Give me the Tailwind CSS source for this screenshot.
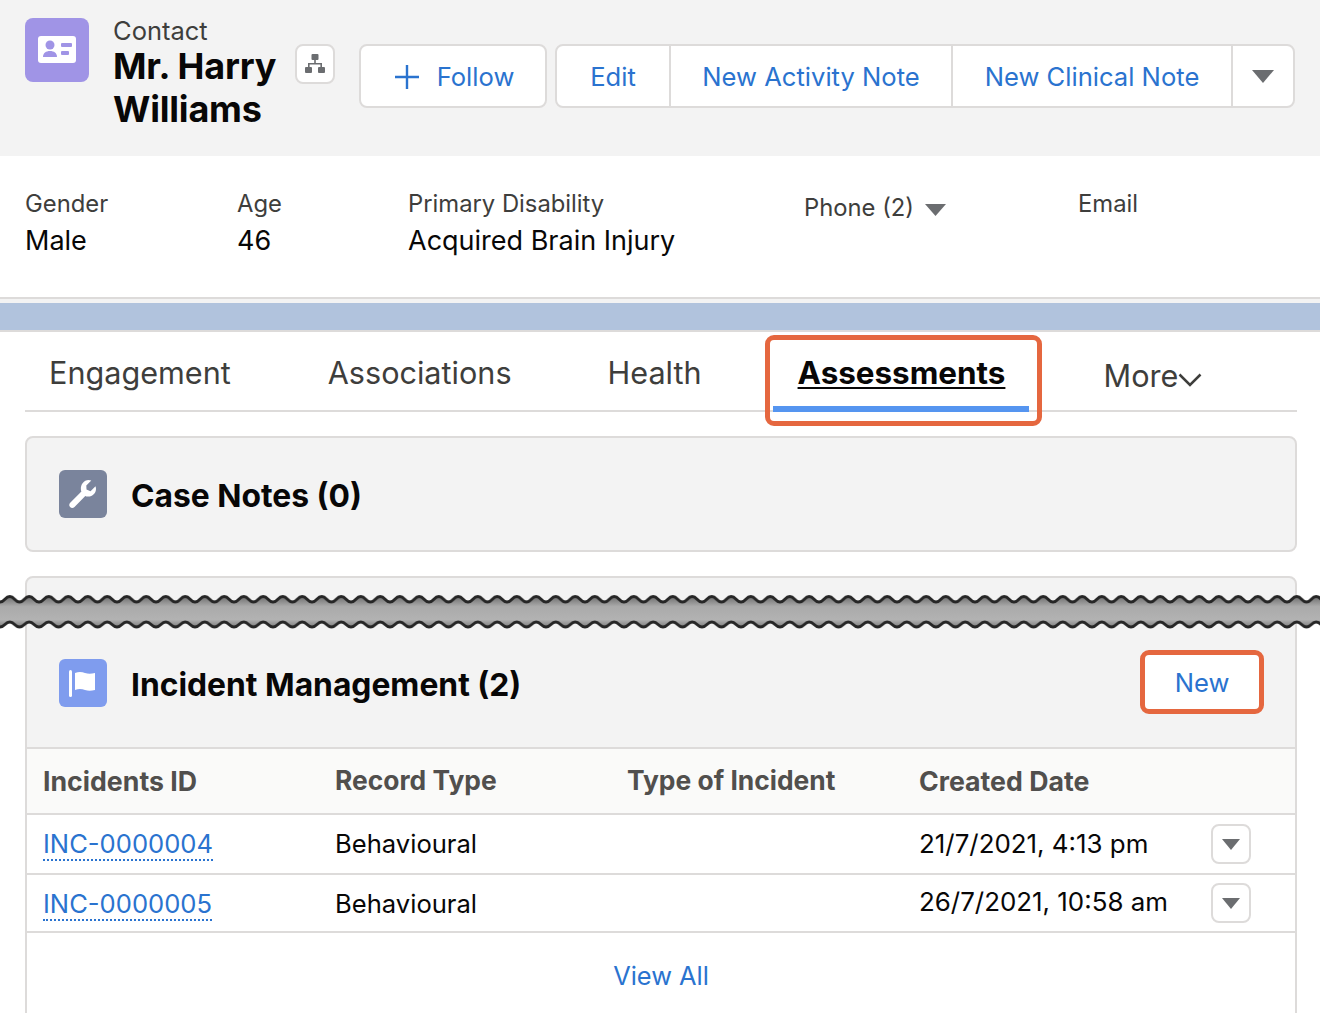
<!DOCTYPE html>
<html lang="en">
<head>
<title>Mr. Harry Williams | Contact</title>
<meta name="viewport" content="width=device-width, initial-scale=1" />
<script src="https://cdn.jsdelivr.net/npm/@tailwindcss/browser@4"></script>
</head>

<body class="relative h-[1013px] overflow-hidden bg-white font-['Inter','Liberation_Sans',sans-serif] text-[#080707]">

<!-- record header -->
<header class="flex h-[156px] bg-[#f3f3f3] pl-[25px] pr-[25px] pt-[18px]">
  <div class="flex h-16 w-16 shrink-0 items-center justify-center rounded-lg bg-[#a094e6]">
    <svg class="h-[28px] w-[38px]" viewBox="0 0 38 28">
      <rect width="38" height="27" rx="3" fill="#fff" />
      <circle cx="12" cy="9" r="4.500" fill="#a094e6" />
      <path d="M5 21c0-4 3-6 7-6s7 2 7 6z" fill="#a094e6" />
      <rect x="23" y="7" width="11" height="4" rx="1" fill="#a094e6" />
      <rect x="23" y="15" width="8" height="4" rx="1" fill="#a094e6" />
    </svg>
  </div>
  <div class="ml-[24px] w-[182px] shrink-0">
    <p class="h-[26px] text-[25.5px] leading-[26px] text-[#3e3e3c]">Contact</p>
    <h1 class="mt-[1px] text-[36px] font-bold leading-[43px] tracking-[-0.2px]">Mr. Harry Williams</h1>
  </div>
  <button class="mt-[26px] flex h-10 w-10 shrink-0 items-center justify-center rounded-lg border-2 border-[#dddbda] bg-white">
    <svg class="h-5 w-5" viewBox="0 0 20 20" fill="#6b6d70">
      <rect x="6.500" y="0" width="7" height="6" rx="1" />
      <rect x="0" y="13" width="7" height="6" rx="1" />
      <rect x="13" y="13" width="7" height="6" rx="1" />
      <path d="M9.200 6h1.600v3H17v4h-1.600v-2.400H4.600V13H3V9h6.200z" />
    </svg>
  </button>
  <button class="ml-6 mt-[26px] flex h-16 w-[188px] shrink-0 items-center justify-center gap-[18px] rounded-lg border-2 border-[#dddbda] bg-white pl-[3px] pt-[2px] text-[25.6px] text-[#2a73cf]">
    <svg class="h-6 w-6" viewBox="0 0 24 24" fill="#2a73cf"><path d="M10.800 0h2.400v10.800H24v2.400H13.200V24h-2.400V13.200H0v-2.400h10.800z" /></svg>
    Follow
  </button>
  <div class="ml-2 mt-[26px] flex h-16 w-[740px] shrink-0 rounded-lg border-2 border-[#dddbda] bg-white text-[25.6px] text-[#2a73cf]">
    <button class="w-[114px] border-r-2 border-[#dddbda] pt-[2px]">Edit</button>
    <button class="w-[282px] border-r-2 border-[#dddbda] pt-[2px]">New Activity Note</button>
    <button class="w-[280px] border-r-2 border-[#dddbda] pt-[2px]">New Clinical Note</button>
    <button class="flex flex-1 items-center justify-center">
      <svg class="h-[13px] w-[22px]" viewBox="0 0 22 13" fill="#6b6d70"><path d="M0 0h22L11 13z" /></svg>
    </button>
  </div>
</header>

<!-- highlights panel -->
<section class="flex h-[141px] pl-[25px] pt-[33px]">
  <div class="w-[212px]">
    <p class="text-[23.800px] leading-[30px] text-[#3e3e3c]">Gender</p>
    <p class="mt-1 text-[27px] leading-[36px]">Male</p>
  </div>
  <div class="w-[171px]">
    <p class="text-[23.800px] leading-[30px] text-[#3e3e3c]">Age</p>
    <p class="mt-1 text-[27px] leading-[36px]">46</p>
  </div>
  <div class="w-[396px]">
    <p class="text-[23.800px] leading-[30px] text-[#3e3e3c]">Primary Disability</p>
    <p class="mt-1 text-[27px] leading-[36px]">Acquired Brain Injury</p>
  </div>
  <div class="w-[274px]">
    <p class="mt-1 flex items-center gap-[11px] text-[23.800px] leading-[30px] text-[#3e3e3c]">
      Phone (2)
      <svg class="mt-1 h-[12px] w-[21px]" viewBox="0 0 21 12" fill="#6b6d70"><path d="M0 0h21L10.500 12z" /></svg>
    </p>
  </div>
  <div>
    <p class="text-[23.800px] leading-[30px] text-[#3e3e3c]">Email</p>
  </div>
</section>

<div class="h-[6px] border-t-2 border-[#dddbda] bg-[#f3f3f3]"></div>
<div class="h-[29px] border-b-2 border-[#dddbda] bg-[#b1c3dd]"></div>

<!-- tabs -->
<nav class="mx-[25px] flex h-[80px] w-[1272px] border-b-2 border-[#dddbda] text-[30.600px] text-[#3e3e3c]">
  <a class="ml-[24px] mt-[21px] h-10 leading-10">Engagement</a>
  <a class="ml-[97px] mt-[21px] h-10 leading-10">Associations</a>
  <a class="ml-[96px] mt-[21px] h-10 leading-10">Health</a>
  <div class="relative ml-[71px] w-[256px]">
    <a class="absolute left-[25px] top-[21px] text-[31.400px] font-bold leading-10 text-[#080707] underline decoration-2 underline-offset-[3px]">Assessments</a>
    <div class="absolute bottom-[-2px] left-0 h-[6px] w-full bg-[#5595f0]"></div>
    <div class="absolute left-[-8px] top-[3px] h-[91px] w-[277px] rounded-[9px] border-[5px] border-[#e5673f]"></div>
  </div>
  <a class="ml-[75px] mt-[24px] flex h-10 items-center leading-10">More
    <svg class="mt-2 h-[14px] w-[24px]" viewBox="0 0 24 14" fill="none" stroke="#3e3e3c" stroke-width="2.500"><path d="M1.500 1.500 12 12 22.500 1.500" /></svg>
  </a>
</nav>

<main class="mx-[25px] mt-[24px] w-[1272px]">
  <section class="flex h-[116px] items-center rounded-lg border-2 border-[#dddbda] bg-[#f3f3f3] pl-8">
    <div class="flex h-12 w-12 items-center justify-center rounded-md bg-[#7a849c]">
      <svg class="h-[32px] w-[32px]" viewBox="0 0 32 32" fill="#fff"><path d="M21.500 2c1 0 2 .2 2.800.5l-5 5 .2 4 4 1.700 5-5c.4 1 .5 2 .5 2.800 0 4.500-4 8-8.500 7.500-.8-.1-1.500-.3-2.200-.6L7.500 29c-1.300 1.300-3.200 1.300-4.400.1-1.200-1.200-1.100-3.100.1-4.300L14.400 13.600c-.3-.7-.5-1.400-.5-2.100C13.400 6.500 17 2 21.500 2z" /></svg>
    </div>
    <h2 class="ml-6 mt-1 text-[31.800px] font-bold">Case Notes (0)</h2>
  </section>

  <section class="mt-6 h-[500px] rounded-t-lg border-2 border-[#dddbda] bg-[#f3f3f3]">
    <div class="flex h-[169px] items-center justify-between pl-8 pr-[31px] pt-[41px]">
      <div class="flex items-center">
        <div class="flex h-12 w-12 items-center justify-center rounded-md bg-[#7f9cee]">
          <svg class="h-[32px] w-[32px]" viewBox="0 0 32 32" fill="#fff">
            <rect x="2" y="3" width="3" height="27" rx="1.500" />
            <path d="M8 6c4-1.500 7-1 10 0s6 1 10 0v17c-4 1-7 1-10 0s-6-1.500-10 0z" />
          </svg>
        </div>
        <h2 class="ml-6 mt-1 text-[31.800px] font-bold">Incident Management (2)</h2>
      </div>
      <button class="mb-[2px] flex h-16 w-[124px] items-center justify-center rounded-[9px] border-[5px] border-[#e5673f] bg-white pt-[3px] text-[25.6px] text-[#2a73cf]">New</button>
    </div>

    <div class="h-[331px] bg-white">
      <div class="grid h-[68px] grid-cols-[292px_292px_292px_1fr] items-center border-y-2 border-[#dddbda] bg-[#fafaf9] pl-4 text-[26.400px] font-bold text-[#514f4d]">
        <span class="text-[26.700px]">Incidents ID</span>
        <span>Record Type</span>
        <span>Type of Incident</span>
        <span class="text-[26.700px]">Created Date</span>
      </div>
      <div class="grid h-[60px] grid-cols-[292px_292px_292px_292px_1fr] items-center border-b-2 border-[#dddbda] pl-4 text-[25.600px]">
        <a class="mt-[2px] w-fit border-b-2 border-dotted border-[#2a73cf] leading-[30px] text-[#2a73cf]">INC-0000004</a>
        <span>Behavioural</span>
        <span></span>
        <span class="text-[25.900px]">21/7/2021, 4:13 pm</span>
        <button class="flex h-10 w-10 items-center justify-center rounded-lg border-2 border-[#dddbda] bg-white">
          <svg class="h-[11px] w-[18px]" viewBox="0 0 18 11" fill="#6b6d70"><path d="M0 0h18L9 11z" /></svg>
        </button>
      </div>
      <div class="grid h-[58px] grid-cols-[292px_292px_292px_292px_1fr] items-center border-b-2 border-[#dddbda] pl-4 text-[25.600px]">
        <a class="mt-1 w-fit border-b-2 border-dotted border-[#2a73cf] leading-[30px] text-[#2a73cf]">INC-0000005</a>
        <span class="mt-[2px]">Behavioural</span>
        <span></span>
        <span class="mb-[2px] text-[25.900px]">26/7/2021, 10:58 am</span>
        <button class="flex h-10 w-10 items-center justify-center rounded-lg border-2 border-[#dddbda] bg-white">
          <svg class="h-[11px] w-[18px]" viewBox="0 0 18 11" fill="#6b6d70"><path d="M0 0h18L9 11z" /></svg>
        </button>
      </div>
      <div class="pt-6 text-center text-[25.400px] text-[#2a73cf]">View All</div>
    </div>
  </section>
</main>

<!-- torn edge over the cards -->
<svg class="absolute left-0 top-[592px] h-[40px] w-[1320px]" viewBox="0 0 1320 40">
  <defs>
    <linearGradient id="tear" gradientUnits="userSpaceOnUse" x1="0" y1="6" x2="0" y2="36">
      <stop offset="0" stop-color="#777" />
      <stop offset="0.28" stop-color="#aaa" />
      <stop offset="0.72" stop-color="#b2b2b2" />
      <stop offset="1" stop-color="#777" />
    </linearGradient>
    <pattern id="wave" patternUnits="userSpaceOnUse" width="19.500" height="40">
      <path d="M0 10C4.900 10 4.900 4.500 9.750 4.500S14.600 10 19.500 10V35C14.600 35 14.600 30 9.750 30S4.900 35 0 35Z" fill="url(#tear)" />
      <path d="M0 10C4.900 10 4.900 4.500 9.750 4.500S14.600 10 19.500 10M0 35C4.900 35 4.900 30 9.750 30S14.600 35 19.500 35" fill="none" stroke="#262626" stroke-width="3" />
    </pattern>
  </defs>
  <rect width="1320" height="40" fill="url(#wave)" />
</svg>

</body>
</html>
